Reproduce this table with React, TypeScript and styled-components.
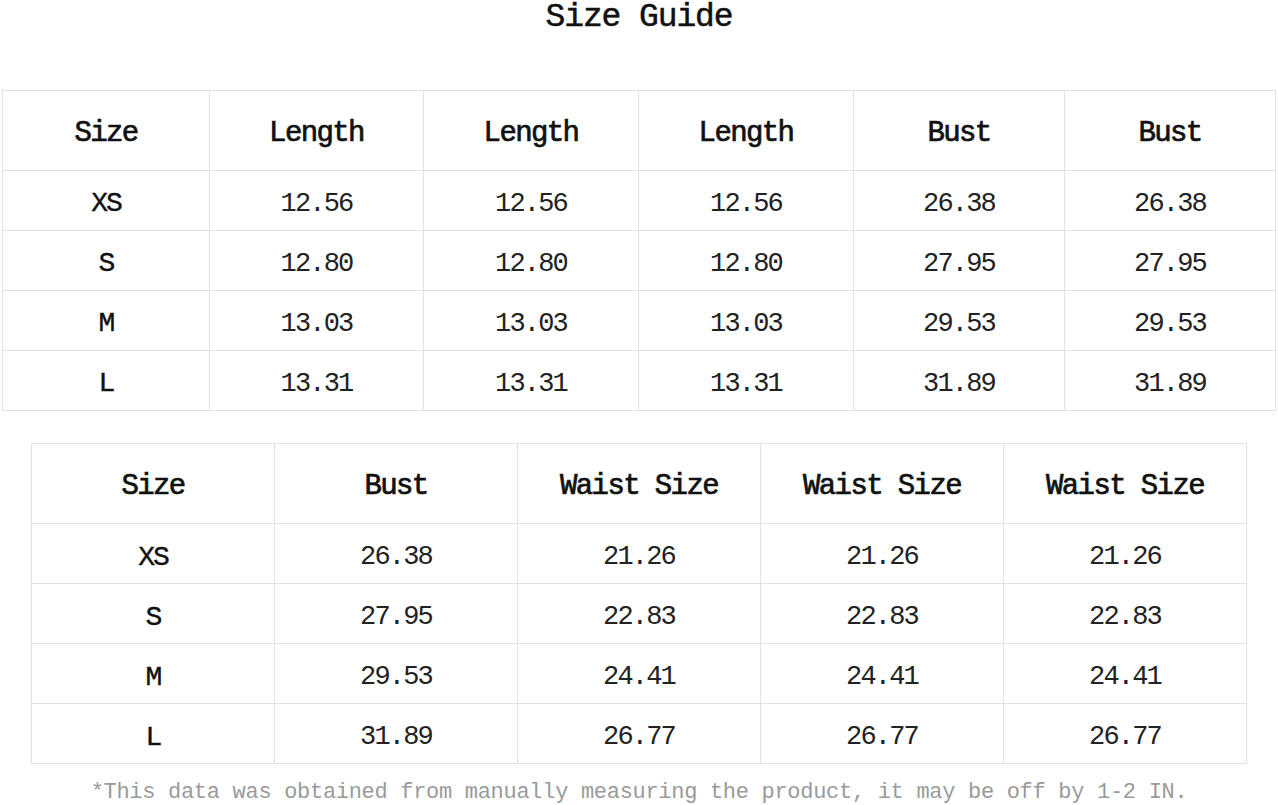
import styled, { createGlobalStyle } from 'styled-components'

const GlobalStyle = createGlobalStyle`
  body {
    margin: 0;
    background: #fff;
    font-family: "Liberation Mono", "Noto Sans CJK SC", monospace;
    color: #1a1a1a;
  }
`

const Page = styled.div`
  width: 1278px;
  height: 805px;
  display: flex;
  flex-direction: column;
  overflow: hidden;
`

const Title = styled.h1`
  margin: 0;
  height: 92px;
  font-size: 33px;
  line-height: 36px;
  font-weight: normal;
  letter-spacing: -1.1px;
  text-align: center;
  color: #111;
  -webkit-text-stroke: 0.5px #111;
`

const Table = styled.table<{ $width: number; $left: number }>`
  border-collapse: collapse;
  table-layout: fixed;
  width: ${(p) => p.$width}px;
  margin-left: ${(p) => p.$left}px;
`

const HeadRow = styled.tr`
  height: 80px;
`

const Row = styled.tr`
  height: 60px;
`

const Th = styled.th<{ $w: number }>`
  width: ${(p) => p.$w}px;
  padding: 0;
  border: 1px solid #e2e2e2;
  font-size: 29px;
  font-weight: normal;
  letter-spacing: -1.6px;
  color: #111;
  -webkit-text-stroke: 0.7px #111;
  text-align: center;
  vertical-align: middle;
  padding-top: 6px;
`

const Td = styled.td`
  padding: 0;
  border: 1px solid #e2e2e2;
  font-size: 27px;
  letter-spacing: -1.8px;
  color: #222;
  text-align: center;
  vertical-align: middle;
  padding-top: 7px;
`

const SizeCell = styled(Td)`
  font-size: 28px;
  letter-spacing: -2px;
  color: #111;
  -webkit-text-stroke: 0.4px #111;
`

const Gap = styled.div`
  height: 33px;
`

const Note = styled.p`
  margin: 16px 0 0;
  text-align: center;
  font-size: 22px;
  letter-spacing: -0.3px;
  color: #9a9a9a;
`

const sizes = ['XS', 'S', 'M', 'L']

const top = {
  cols: [
    { label: 'Size', w: 206 },
    { label: 'Length', w: 213 },
    { label: 'Length', w: 214 },
    { label: 'Length', w: 214 },
    { label: 'Bust', w: 210 },
    { label: 'Bust', w: 210 },
  ],
  rows: [
    ['12.56', '12.56', '12.56', '26.38', '26.38'],
    ['12.80', '12.80', '12.80', '27.95', '27.95'],
    ['13.03', '13.03', '13.03', '29.53', '29.53'],
    ['13.31', '13.31', '13.31', '31.89', '31.89'],
  ],
}

const bottom = {
  cols: [
    { label: 'Size', w: 242 },
    { label: 'Bust', w: 242 },
    { label: 'Waist Size', w: 242 },
    { label: 'Waist Size', w: 242 },
    { label: 'Waist Size', w: 242 },
  ],
  rows: [
    ['26.38', '21.26', '21.26', '21.26'],
    ['27.95', '22.83', '22.83', '22.83'],
    ['29.53', '24.41', '24.41', '24.41'],
    ['31.89', '26.77', '26.77', '26.77'],
  ],
}

type Data = { cols: { label: string; w: number }[]; rows: string[][] }

function SizeTable({ data, width, left }: { data: Data; width: number; left: number }) {
  return (
    <Table $width={width} $left={left}>
      <thead>
        <HeadRow>
          {data.cols.map((c, i) => (
            <Th key={i} $w={c.w}>
              {c.label}
            </Th>
          ))}
        </HeadRow>
      </thead>
      <tbody>
        {data.rows.map((r, i) => (
          <Row key={sizes[i]}>
            <SizeCell>{sizes[i]}</SizeCell>
            {r.map((v, j) => (
              <Td key={j}>{v}</Td>
            ))}
          </Row>
        ))}
      </tbody>
    </Table>
  )
}

export default function App() {
  return (
    <Page>
      <GlobalStyle />
      <Title>Size Guide</Title>
      <SizeTable data={top} width={1267} left={2} />
      <Gap />
      <SizeTable data={bottom} width={1210} left={31} />
      <Note>
        *This data was obtained from manually measuring the product, it may be off by 1-2 IN.
      </Note>
    </Page>
  )
}
